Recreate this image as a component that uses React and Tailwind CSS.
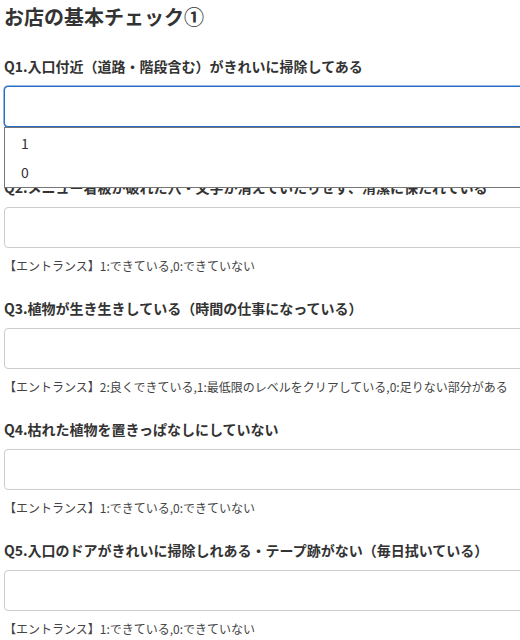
import React from "react";

const questions = [
  {
    label: "Q1.入口付近（道路・階段含む）がきれいに掃除してある",
    hint: "【エントランス】1:できている,0:できていない",
    focused: true,
  },
  {
    label: "Q2.メニュー看板が破れた穴・文字が消えていたりせず、清潔に保たれている",
    hint: "【エントランス】1:できている,0:できていない",
  },
  {
    label: "Q3.植物が生き生きしている（時間の仕事になっている）",
    hint: "【エントランス】2:良くできている,1:最低限のレベルをクリアしている,0:足りない部分がある",
  },
  {
    label: "Q4.枯れた植物を置きっぱなしにしていない",
    hint: "【エントランス】1:できている,0:できていない",
  },
  {
    label: "Q5.入口のドアがきれいに掃除しれある・テープ跡がない（毎日拭いている）",
    hint: "【エントランス】1:できている,0:できていない",
  },
  {
    label: "Q6.入口マットが汚れていない",
    hint: "【エントランス】1:できている,0:できていない",
  },
];

function Question({ q }) {
  return (
    <div className="relative mb-[23px]">
      <div className="text-[14px] leading-[20px] font-bold text-[#333] whitespace-nowrap">
        {q.label}
      </div>
      <div
        className={
          "mt-[10px] h-[41px] w-[560px] rounded-[4px] bg-white border " +
          (q.focused ? "border-[#2a6dc4] shadow-[0_0_0_0.5px_#2a6dc4]" : "border-[#cccccc]")
        }
      />
      <div className="mt-[9px] text-[12px] leading-[18px] text-[#444] whitespace-nowrap">
        {q.hint}
      </div>
      {q.focused && (
        <div className="absolute left-0 top-[71px] w-[560px] bg-white border border-[#767676] z-10">
          <div className="h-[30px] flex items-center pl-[16px] text-[14px] text-[#333]">1</div>
          <div className="h-[29px] flex items-center pl-[16px] text-[14px] text-[#333]">0</div>
        </div>
      )}
    </div>
  );
}

export default function App() {
  return (
    <div
      className="w-[520px] h-[640px] overflow-hidden bg-white px-[4px] pt-[3px]"
      style={{ fontFamily: '"Noto Sans CJK JP", "Noto Sans", sans-serif' }}
    >
      <h1 className="text-[20px] leading-[28px] font-bold text-[#333] mb-[25px] whitespace-nowrap">
        お店の基本チェック①
      </h1>
      {questions.map((q, i) => (
        <Question key={i} q={q} />
      ))}
    </div>
  );
}
